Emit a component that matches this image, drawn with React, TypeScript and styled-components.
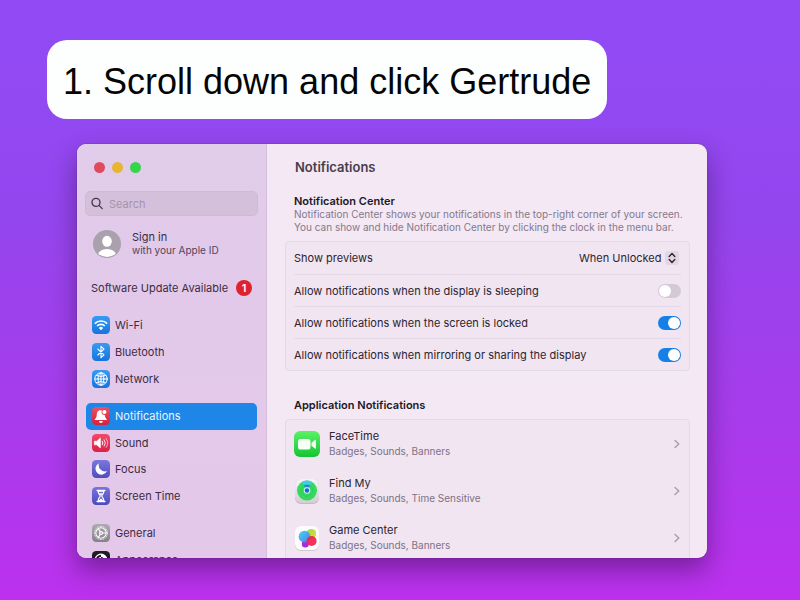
import React from "react";
import styled, { createGlobalStyle, css } from "styled-components";

const GlobalStyle = createGlobalStyle`
  *, *::before, *::after { box-sizing: border-box; }
  body { margin: 0; }
  h1, h2, p, ul { margin: 0; padding: 0; }
  button, input, select { font: inherit; color: inherit; }
`;

const Page = styled.main`
  display: flex;
  flex-direction: column;
  align-items: flex-start;
  gap: 25px;
  height: 100vh;
  padding: 40px 47px 42px;
  overflow: hidden;
  background: linear-gradient(180deg, #914bf5 0%, #9446ee 35%, #a83cec 70%, #bc31ee 100%);
  font-family: Inter, "Liberation Sans", sans-serif;
`;

const Banner = styled.h1`
  padding: 22px 16px 17px;
  border-radius: 20px;
  background: #fdfffe;
  color: #050505;
  font: 400 36px/40px "Liberation Sans", Arial, sans-serif;
  white-space: nowrap;
`;

const Window = styled.section`
  display: flex;
  flex: 1;
  align-self: stretch;
  min-height: 0;
  margin: 0 46px 0 30px;
  overflow: hidden;
  border-radius: 9px;
  background: #f3e8f4;
  box-shadow: 0 0 1px rgba(40, 10, 60, 0.7), 0 12px 26px rgba(50, 10, 70, 0.48);
`;

const Sidebar = styled.aside`
  flex: none;
  width: 190px;
  padding: 18px 8px 0;
  border-right: 1px solid #d5bddd;
  background: linear-gradient(180deg, #e0cdea 0%, #e2c9e9 35%, #e4c8ea 100%);
  color: #3b2c43;
  font-size: 11px;
  line-height: 14px;
`;

const TrafficLights = styled.div`
  display: flex;
  gap: 7px;
  padding-left: 9px;
`;

const Light = styled.button<{ $color: string }>`
  width: 11px;
  height: 11px;
  padding: 0;
  border: 0;
  border-radius: 50%;
  background: ${(p) => p.$color};
`;

const SearchField = styled.label`
  display: flex;
  align-items: center;
  gap: 5px;
  height: 25px;
  margin-top: 18px;
  padding: 0 5px;
  border: 1px solid #cfb9d5;
  border-radius: 5px;
  background: #d5c0dc;

  svg { flex: none; }
`;

const SearchInput = styled.input`
  flex: 1;
  min-width: 0;
  padding: 0;
  border: 0;
  outline: 0;
  background: none;
  &::placeholder { color: #a592ac; opacity: 1; }
`;

const Account = styled.a`
  display: flex;
  align-items: center;
  gap: 11px;
  margin-top: 14px;
  padding-left: 8px;
  color: inherit;
  text-decoration: none;
`;

const AccountText = styled.span`
  display: flex;
  flex-direction: column;
  line-height: 13px;

  small { font-size: 10px; color: #54435d; }
`;

const UpdateLink = styled.a`
  display: flex;
  align-items: center;
  justify-content: space-between;
  margin: 22px 6px 0;
  color: inherit;
  text-decoration: none;
  white-space: nowrap;
`;

const Badge = styled.span`
  width: 16px;
  height: 16px;
  border-radius: 50%;
  background: #e0212f;
  color: #fff;
  font-weight: 600;
  line-height: 16px;
  text-align: center;
`;

const Nav = styled.nav`
  display: flex;
  flex-direction: column;
  gap: 11px;
  margin-top: 16px;
`;

const NavGroup = styled.ul<{ $height: number }>`
  display: grid;
  grid-auto-rows: 1fr;
  flex: none;
  height: ${(p) => p.$height}px;
  list-style: none;
`;

const NavLink = styled.a<{ $selected?: boolean }>`
  display: flex;
  align-items: center;
  gap: 5px;
  height: 100%;
  margin: 0 1px;
  padding-left: 6px;
  border-radius: 5px;
  color: inherit;
  text-decoration: none;
  ${(p) =>
    p.$selected &&
    css`
      background: #1d86e6;
      color: #e9f6ff;
    `}
`;

const Tile = styled.svg`
  flex: none;
  width: 18px;
  height: 18px;
`;

const Content = styled.div`
  flex: 1;
  min-width: 0;
  padding: 15px 17px 0 18px;
  color: #2c2430;
  font-size: 11px;
  line-height: 14px;
`;

const PaneTitle = styled.h2`
  padding-left: 10px;
  color: #483d4c;
  font-size: 13px;
  font-weight: 600;
  line-height: 16px;
`;

const SectionTitle = styled.h2<{ $gap: number }>`
  margin-top: ${(p) => p.$gap}px;
  padding-left: 9px;
  color: #211826;
  font-size: 11px;
  font-weight: 600;
  line-height: 14px;
`;

const Description = styled.p`
  padding-left: 9px;
  color: #85788a;
  font-size: 10px;
  line-height: 13px;
`;

const Card = styled.div<{ $height?: number }>`
  display: grid;
  grid-auto-rows: 1fr;
  height: ${(p) => (p.$height ? `${p.$height}px` : "auto")};
  margin-top: 7px;
  padding: 0 8px;
  border: 1px solid #e2d9e9;
  border-radius: 4px;
  background: #f0e5f1;

  > * + * { border-top: 1px solid #e5d9e8; }
`;

const Setting = styled.label`
  display: flex;
  align-items: center;
  justify-content: space-between;
`;

const Picker = styled.span`
  display: flex;
  align-items: center;
  gap: 3px;
  padding-right: 2px;
`;

const Select = styled.select`
  appearance: none;
  padding: 0;
  border: 0;
  outline: 0;
  background: none;
`;

const Switch = styled.input`
  appearance: none;
  display: flex;
  width: 23px;
  height: 14px;
  margin: 0;
  padding: 1px;
  border-radius: 7px;
  background: #d4c9d6;

  &::before {
    content: "";
    width: 12px;
    height: 12px;
    border-radius: 50%;
    background: #fff;
  }
  &:checked { justify-content: flex-end; background: #1680e8; }
`;

const AppRow = styled.button`
  display: flex;
  align-items: center;
  gap: 9px;
  height: 47px;
  padding: 0 1px 0 0;
  border: 0;
  background: none;
  text-align: left;
`;

const AppText = styled.span`
  flex: 1;
  display: flex;
  flex-direction: column;
  line-height: 15px;

  small { font-size: 10px; color: #7f7284; }
`;

const AppIcon = styled.svg`
  flex: none;
  width: 26px;
  height: 26px;
`;

function Gradient({ id, from, to }: { id: string; from: string; to: string }) {
  return (
    <defs>
      <linearGradient id={id} x1="0" y1="0" x2="0" y2="1">
        <stop offset="0" stopColor={from} />
        <stop offset="1" stopColor={to} />
      </linearGradient>
    </defs>
  );
}

function IconTile({ name, from, to, children }: { name: string; from: string; to: string; children: React.ReactNode }) {
  return (
    <Tile viewBox="0 0 18 18" aria-hidden="true">
      <Gradient id={`tile-${name}`} from={from} to={to} />
      <rect width="18" height="18" rx="4.2" fill={`url(#tile-${name})`} />
      {children}
    </Tile>
  );
}

const line = { fill: "none", stroke: "#fff", strokeLinecap: "round", strokeLinejoin: "round" } as const;

const WifiIcon = (
  <IconTile name="wifi" from="#389bf2" to="#1474de">
    <g {...line} strokeWidth="1.6" strokeLinecap="butt">
      <path d="M2.8 7.6a8.8 8.8 0 0 1 12.4 0" />
      <path d="M5.1 10a5.6 5.6 0 0 1 7.8 0" />
    </g>
    <path d="M9 14.2l-2.2-2.3a3.2 3.2 0 0 1 4.4 0z" fill="#fff" />
  </IconTile>
);

const BluetoothIcon = (
  <IconTile name="bluetooth" from="#389bf2" to="#1474de">
    <path d="M5.8 6l6.2 5.8-3 2.9V3.3l3 2.9L5.8 12" {...line} strokeWidth="1.1" />
  </IconTile>
);

const NetworkIcon = (
  <IconTile name="network" from="#389bf2" to="#1474de">
    <g {...line} strokeWidth="1">
      <circle cx="9" cy="9" r="6.2" />
      <ellipse cx="9" cy="9" rx="2.9" ry="6.2" />
      <path d="M9 2.8v12.4M2.8 9h12.4M4.2 5.5q4.8 2 9.6 0M4.2 12.5q4.8-2 9.6 0" />
    </g>
  </IconTile>
);

const BellIcon = (
  <IconTile name="bell" from="#ee5163" to="#d5213c">
    <path d="M8.6 3.3c-2.5 0-3.8 1.7-3.8 4 0 2.8-.7 3.7-2 5.1v.7h12v-.7c-1.3-1.4-2-2.3-2-5.1 0-2.3-1.5-4-4.2-4z" fill="#fff" />
    <path d="M7 14h3.800a1.900 1.900 0 0 1-3.800 0z" fill="#fff" />
    <circle cx="12.4" cy="5" r="2.9" fill="#e34458" />
    <circle cx="12.4" cy="5" r="2.1" fill="#fff" />
  </IconTile>
);

const SoundIcon = (
  <IconTile name="sound" from="#f04a6b" to="#dc1f49">
    <path d="M2.3 7.2h2.4L8.4 4v10l-3.700-3.200H2.300z" fill="#fff" stroke="#fff" strokeWidth=".6" strokeLinejoin="round" />
    <g {...line} strokeWidth="1">
      <path d="M10.3 7.2a3 3 0 0 1 0 3.600" />
      <path d="M12.2 5.800a5.200 5.200 0 0 1 0 6.400" opacity=".85" />
      <path d="M14.1 4.500a7.400 7.400 0 0 1 0 9" opacity=".6" />
    </g>
  </IconTile>
);

const FocusIcon = (
  <IconTile name="focus" from="#7a78dc" to="#504cc0">
    <path d="M7 3.200a6 6 0 1 0 8 7.900A6.300 6.300 0 0 1 7 3.200z" fill="#fff" />
  </IconTile>
);

const ScreenTimeIcon = (
  <IconTile name="screentime" from="#7774dc" to="#4e4abf">
    <path d="M5.2 3.500h7.600M5.200 14.500h7.600" {...line} strokeWidth="1.600" />
    <path d="M6.200 4.200c0 3 2 3.500 2 4.800s-2 1.800-2 4.800h5.600c0-3-2-3.500-2-4.800s2-1.800 2-4.800z" {...line} strokeWidth="1.200" />
    <path d="M7 6.200h4L9 8.600zM6.600 13.800L9 11.200l2.400 2.600z" fill="#fff" />
  </IconTile>
);

const GeneralIcon = (
  <IconTile name="general" from="#b0abb2" to="#858188">
    <circle cx="9" cy="9" r="6.500" fill="none" stroke="#fff" strokeWidth="1" strokeDasharray=".9 .8" />
    <g {...line} strokeWidth="1.100">
      <circle cx="9" cy="9" r="5.200" />
      <circle cx="9" cy="9" r="1.400" />
      <path d="M10.400 9h3.700M8.300 7.700L6.400 4.600M8.300 10.300l-1.900 3.100" />
    </g>
  </IconTile>
);

const AppearanceIcon = (
  <IconTile name="appearance" from="#242026" to="#0b090c">
    <circle cx="9" cy="9" r="5.800" {...line} strokeWidth="1.300" />
    <path d="M9 3.200a5.800 5.800 0 0 1 0 11.600z" fill="#fff" />
    <path d="M9 6a3 3 0 0 0 0 6z" fill="#fff" />
    <path d="M9 6a3 3 0 0 1 0 6z" fill="#151217" />
  </IconTile>
);

const FaceTimeIcon = (
  <AppIcon viewBox="0 0 26 26" aria-hidden="true">
    <Gradient id="facetime" from="#5bf267" to="#14c434" />
    <rect width="26" height="26" rx="6" fill="url(#facetime)" />
    <rect x="4" y="8" width="12.500" height="10.500" rx="2.600" fill="#f6fff6" />
    <path d="M17.500 11.700l3.400-2.800c.5-.4 1-.2 1 .4v7.800c0 .6-.5.8-1 .4l-3.400-2.800z" fill="#f6fff6" />
  </AppIcon>
);

const FindMyIcon = (
  <AppIcon viewBox="0 0 26 26" aria-hidden="true">
    <Gradient id="findmy" from="#f7f4f7" to="#d2cdd4" />
    <rect x="1" y="1" width="24" height="25" rx="6" fill="#c5b9c9" />
    <rect x="1" y="1" width="24" height="24" rx="6" fill="url(#findmy)" />
    <circle cx="13" cy="12.500" r="10" fill="#35d95c" />
    <path d="M13 13L8 3.900a10 10 0 0 1 10 0z" fill="#41cdea" />
    <circle cx="13" cy="12.500" r="5.800" fill="none" stroke="#2bc45c" strokeWidth="1" opacity=".6" />
    <circle cx="13" cy="12.500" r="3.200" fill="#c8f4ee" />
    <circle cx="13" cy="12.500" r="2.200" fill="#1766dc" />
    <path d="M10.500 8h5" stroke="#1766dc" strokeWidth="1.500" />
  </AppIcon>
);

const GameCenterIcon = (
  <AppIcon viewBox="0 0 26 26" aria-hidden="true">
    <defs>
      <linearGradient id="game-blue" x1="0" y1="0" x2="1" y2="1">
        <stop offset="0" stopColor="#3fd0e4" />
        <stop offset=".6" stopColor="#3d9df0" />
        <stop offset="1" stopColor="#7d68dc" />
      </linearGradient>
      <linearGradient id="game-yellow" x1="0" y1="0" x2="1" y2="1">
        <stop offset="0" stopColor="#8ee04e" />
        <stop offset="1" stopColor="#f6d52e" />
      </linearGradient>
    </defs>
    <rect x="1" y="2" width="24" height="24" rx="6" fill="#d2c5d5" />
    <rect x="1" y="1" width="24" height="24" rx="6" fill="#fdfbfd" />
    <circle cx="17.300" cy="8.800" r="4.900" fill="url(#game-yellow)" />
    <circle cx="11.300" cy="19" r="3.500" fill="#a92be0" />
    <circle cx="10.500" cy="11.700" r="5.900" fill="url(#game-blue)" opacity=".94" />
    <circle cx="17.600" cy="16" r="5" fill="#ee2450" opacity=".93" />
  </AppIcon>
);

const navGroups = [
  {
    height: 80,
    items: [
      { label: "Wi-Fi", icon: WifiIcon },
      { label: "Bluetooth", icon: BluetoothIcon },
      { label: "Network", icon: NetworkIcon },
    ],
  },
  {
    height: 106,
    items: [
      { label: "Notifications", icon: BellIcon, selected: true },
      { label: "Sound", icon: SoundIcon },
      { label: "Focus", icon: FocusIcon },
      { label: "Screen Time", icon: ScreenTimeIcon },
    ],
  },
  {
    height: 53,
    items: [
      { label: "General", icon: GeneralIcon },
      { label: "Appearance", icon: AppearanceIcon },
    ],
  },
];

const switches = [
  { label: "Allow notifications when the display is sleeping", on: false },
  { label: "Allow notifications when the screen is locked", on: true },
  { label: "Allow notifications when mirroring or sharing the display", on: true },
];

const apps = [
  { name: "FaceTime", detail: "Badges, Sounds, Banners", icon: FaceTimeIcon },
  { name: "Find My", detail: "Badges, Sounds, Time Sensitive", icon: FindMyIcon },
  { name: "Game Center", detail: "Badges, Sounds, Banners", icon: GameCenterIcon },
];

export default function App() {
  return (
    <Page>
      <GlobalStyle />
      <Banner>1. Scroll down and click Gertrude</Banner>
      <Window aria-label="System Settings">
        <Sidebar>
          <TrafficLights>
            <Light $color="#e14a5c" aria-label="Close" />
            <Light $color="#e9b52f" aria-label="Minimize" />
            <Light $color="#34d64a" aria-label="Zoom" />
          </TrafficLights>
          <SearchField>
            <svg width="13" height="13" viewBox="0 0 13 13" fill="none" stroke="#43334b" strokeWidth="1.3" strokeLinecap="round" aria-hidden="true">
              <circle cx="5" cy="5.400" r="4" />
              <path d="M8 8.400l3.200 3.200" />
            </svg>
            <SearchInput type="text" placeholder="Search" aria-label="Search" />
          </SearchField>
          <Account href="#sign-in">
            <svg width="28" height="28" viewBox="0 0 28 28" aria-hidden="true">
              <defs>
                <clipPath id="avatar">
                  <circle cx="14" cy="14" r="13" />
                </clipPath>
              </defs>
              <circle cx="14" cy="14" r="14" fill="#a9a2ad" />
              <g fill="#fff" clipPath="url(#avatar)">
                <ellipse cx="14" cy="11.300" rx="4.800" ry="5.500" />
                <ellipse cx="14" cy="24.800" rx="9" ry="5.800" />
              </g>
            </svg>
            <AccountText>
              Sign in
              <small>with your Apple ID</small>
            </AccountText>
          </Account>
          <UpdateLink href="#software-update">
            Software Update Available
            <Badge>1</Badge>
          </UpdateLink>
          <Nav aria-label="Settings">
            {navGroups.map((group) => (
              <NavGroup key={group.items[0].label} $height={group.height}>
                {group.items.map((item) => (
                  <li key={item.label}>
                    <NavLink href="#pane" $selected={"selected" in item}>
                      {item.icon}
                      {item.label}
                    </NavLink>
                  </li>
                ))}
              </NavGroup>
            ))}
          </Nav>
        </Sidebar>
        <Content>
          <PaneTitle>Notifications</PaneTitle>
          <SectionTitle $gap={19}>Notification Center</SectionTitle>
          <Description>
            Notification Center shows your notifications in the top-right corner of your screen.
            <br />
            You can show and hide Notification Center by clicking the clock in the menu bar.
          </Description>
          <Card $height={130}>
            <Setting>
              Show previews
              <Picker>
                <Select defaultValue="When Unlocked">
                  <option>Always</option>
                  <option>When Unlocked</option>
                  <option>Never</option>
                </Select>
                <svg width="14" height="14" viewBox="0 0 14 14" aria-hidden="true">
                  <rect width="14" height="14" rx="3" fill="#e3d7e5" />
                  <path d="M4.200 5.400L7 2.600l2.800 2.800M4.200 8.600L7 11.400l2.800-2.800" fill="none" stroke="#2c2430" strokeWidth="1.400" strokeLinecap="round" strokeLinejoin="round" />
                </svg>
              </Picker>
            </Setting>
            {switches.map((item) => (
              <Setting key={item.label}>
                {item.label}
                <Switch type="checkbox" role="switch" defaultChecked={item.on} />
              </Setting>
            ))}
          </Card>
          <SectionTitle $gap={27}>Application Notifications</SectionTitle>
          <Card>
            {apps.map((app) => (
              <AppRow key={app.name} type="button">
                {app.icon}
                <AppText>
                  {app.name}
                  <small>{app.detail}</small>
                </AppText>
                <svg width="6" height="10" viewBox="0 0 6 10" fill="none" stroke="#a99dad" strokeWidth="1.400" strokeLinecap="round" strokeLinejoin="round" aria-hidden="true">
                  <path d="M1 1.500L4.800 5 1 8.500" />
                </svg>
              </AppRow>
            ))}
          </Card>
        </Content>
      </Window>
    </Page>
  );
}
